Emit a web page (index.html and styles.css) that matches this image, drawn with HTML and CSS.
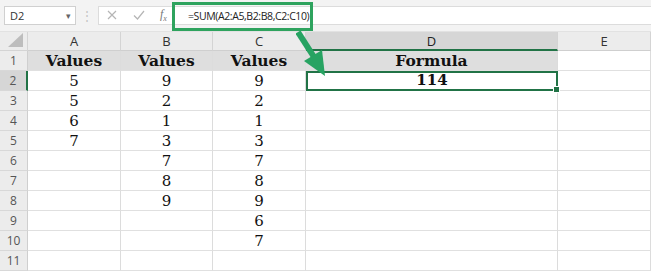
FILE: index.html
```html
<!DOCTYPE html>
<html>
<head>
<meta charset="utf-8">
<link rel="stylesheet" href="styles.css">
</head>
<body>
<div class="app">
  <div class="toolbar">
    <div class="namebox"><span>D2</span><span class="caret">&#9662;</span></div>
    <div class="dots">&#8942;</div>
    <div class="fbar">
      <div class="icons">
        <svg class="ic" width="12" height="12" viewBox="0 0 12 12"><path d="M2 2 L10 10 M10 2 L2 10" stroke="#b5b5b5" stroke-width="1.2" fill="none"/></svg>
        <svg class="ic" width="14" height="12" viewBox="0 0 14 12"><path d="M2 6.5 L5.5 10 L12 2" stroke="#b5b5b5" stroke-width="1.2" fill="none"/></svg>
        <span class="fx">f<sub>x</sub></span>
      </div>
      <div class="formula">=SUM(A2:A5,B2:B8,C2:C10)</div>
    </div>
  </div>
  <div class="sheet">
    <div class="corner"><svg width="18" height="16" viewBox="0 0 18 16"><path d="M17 1 L17 15 L2 15 Z" fill="#bdbdbd"/></svg></div>
    <div class="ch">A</div><div class="ch">B</div><div class="ch">C</div><div class="ch ch-sel">D</div><div class="ch">E</div>

    <div class="rh">1</div><div class="c hd">Values</div><div class="c hd">Values</div><div class="c hd">Values</div><div class="c hd dcol">Formula</div><div class="c"></div>
    <div class="rh rh-sel">2</div><div class="c">5</div><div class="c">9</div><div class="c">9</div><div class="c dcol sel">114</div><div class="c"></div>
    <div class="rh">3</div><div class="c">5</div><div class="c">2</div><div class="c">2</div><div class="c dcol"></div><div class="c"></div>
    <div class="rh">4</div><div class="c">6</div><div class="c">1</div><div class="c">1</div><div class="c dcol"></div><div class="c"></div>
    <div class="rh">5</div><div class="c">7</div><div class="c">3</div><div class="c">3</div><div class="c dcol"></div><div class="c"></div>
    <div class="rh">6</div><div class="c"></div><div class="c">7</div><div class="c">7</div><div class="c dcol"></div><div class="c"></div>
    <div class="rh">7</div><div class="c"></div><div class="c">8</div><div class="c">8</div><div class="c dcol"></div><div class="c"></div>
    <div class="rh">8</div><div class="c"></div><div class="c">9</div><div class="c">9</div><div class="c dcol"></div><div class="c"></div>
    <div class="rh">9</div><div class="c"></div><div class="c"></div><div class="c">6</div><div class="c dcol"></div><div class="c"></div>
    <div class="rh">10</div><div class="c"></div><div class="c"></div><div class="c">7</div><div class="c dcol"></div><div class="c"></div>
    <div class="rh">11</div><div class="c"></div><div class="c"></div><div class="c"></div><div class="c dcol"></div><div class="c"></div>
  </div>
  <div class="highlight"></div>
  <svg class="arrow" width="40" height="50" viewBox="0 0 40 50">
    <path d="M2 2 L18 27" stroke="#27a362" stroke-width="6" fill="none"/>
    <path d="M8 31 L26 20 L29 46 Z" fill="#27a362"/>
  </svg>
</div>
</body>
</html>
```
FILE: styles.css
```css
html, body { margin: 0; padding: 0; background: #ffffff; }
.app { position: relative; width: 651px; height: 273px; overflow: hidden; font-family: "Open Sans", "Liberation Sans", sans-serif; }
.toolbar { height: 32px; background: #f3f3f3; display: flex; align-items: center; padding-left: 4px; box-sizing: border-box; border-bottom: 1px solid #e2e2e2; }
.namebox { width: 72px; height: 19px; background: #fff; border: 1px solid #d0d0d0; box-sizing: border-box; display: flex; align-items: center; justify-content: space-between; padding: 0 4px 0 5px; font-size: 11px; color: #333; }
.caret { font-size: 9px; color: #666; }
.dots { width: 22px; text-align: center; color: #c4c4c4; font-size: 12px; }
.fbar { flex: 1; height: 19px; background: #fff; border: 1px solid #dcdcdc; border-right: none; box-sizing: border-box; display: flex; align-items: center; }
.icons { display: flex; align-items: center; gap: 14px; padding-left: 7px; width: 66px; }
.fx { font-family: "Liberation Serif", serif; font-style: italic; font-size: 12px; color: #777; }
.fx sub { font-size: 8px; }
.formula { font-size: 10.5px; color: #222; padding-left: 16px; letter-spacing: -0.4px; }
.sheet { display: grid; grid-template-columns: 28px 93px 92px 93px 252px 93px; grid-template-rows: 19px repeat(11, 20px); }
.corner { background: #ececec; border-right: 1px solid #d4d4d4; border-bottom: 1px solid #d4d4d4; display: flex; align-items: flex-end; justify-content: flex-end; padding: 0 3px 2px 0; box-sizing: border-box; }
.ch { background: #ececec; border-right: 1px solid #d4d4d4; border-bottom: 1px solid #cfcfcf; box-sizing: border-box; display: flex; align-items: center; justify-content: center; font-size: 13px; color: #333; }
.ch-sel { background: #d6d6d6; border-bottom: 2px solid #217346; color: #222; }
.rh { background: #ececec; border-right: 1px solid #cfcfcf; border-bottom: 1px solid #d8d8d8; box-sizing: border-box; display: flex; align-items: center; justify-content: center; font-size: 12px; color: #555; }
.rh-sel { background: #d6d6d6; border-right: 2px solid #217346; }
.c { border-right: 1px solid #dcdcdc; border-bottom: 1px solid #e0e0e0; box-sizing: border-box; display: flex; align-items: flex-end; justify-content: center; font-family: "DejaVu Serif", "Liberation Serif", serif; font-size: 15px; line-height: 18px; color: #111; }
.hd { background: #dedede; font-weight: bold; font-size: 15.5px; }
.sel { border: 2px solid #217346; font-weight: bold; position: relative; }
.sel::after { content: ""; position: absolute; right: -4px; bottom: -4px; width: 5px; height: 5px; background: #217346; border: 1px solid #fff; }
.highlight { position: absolute; left: 172px; top: 2px; width: 141px; height: 29px; border: 3px solid #2ea35e; box-sizing: border-box; }
.arrow { position: absolute; left: 296px; top: 30px; }
```
